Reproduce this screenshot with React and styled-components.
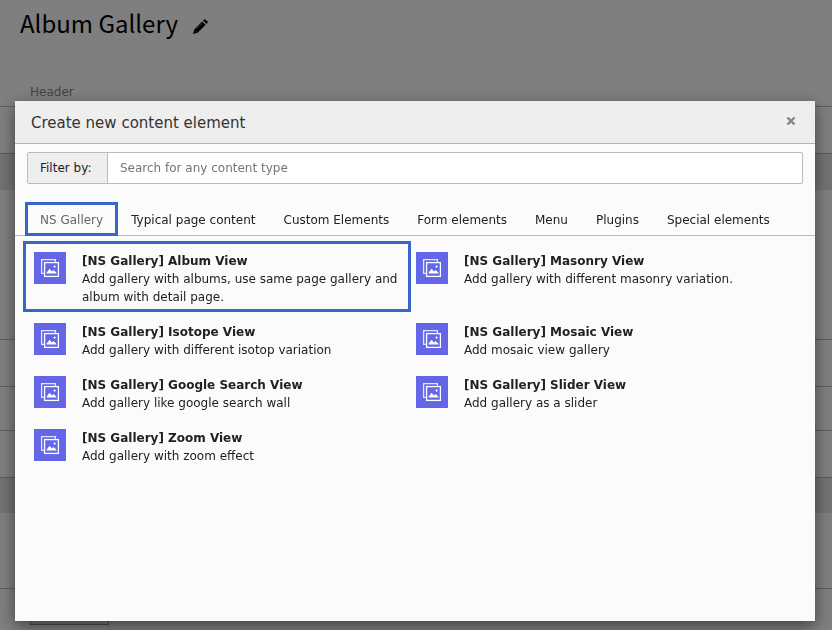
import { useState } from 'react';
import styled, { createGlobalStyle } from 'styled-components';

const tabs = [
    'NS Gallery',
    'Typical page content',
    'Custom Elements',
    'Form elements',
    'Menu',
    'Plugins',
    'Special elements',
];

const elements = [
    { title: '[NS Gallery] Album View', text: 'Add gallery with albums, use same page gallery and album with detail page.', marked: true },
    { title: '[NS Gallery] Masonry View', text: 'Add gallery with different masonry variation.' },
    { title: '[NS Gallery] Isotope View', text: 'Add gallery with different isotop variation' },
    { title: '[NS Gallery] Mosaic View', text: 'Add mosaic view gallery' },
    { title: '[NS Gallery] Google Search View', text: 'Add gallery like google search wall' },
    { title: '[NS Gallery] Slider View', text: 'Add gallery as a slider' },
    { title: '[NS Gallery] Zoom View', text: 'Add gallery with zoom effect' },
];

function GalleryIcon() {
    return (
        <svg width="32" height="32" viewBox="0 0 32 32" aria-hidden="true">
            <rect width="32" height="32" fill="#6366e6" />
            <path d="M10 21.4H7.6V7.6H21.4V10" fill="none" stroke="#e4e4ff" strokeWidth="1.3" />
            <rect x="10.6" y="10.6" width="13.8" height="13.8" fill="none" stroke="#fff" strokeWidth="1.3" />
            <path d="M12.7 21.6V20.4L15.6 16.8L18 19.4L19.6 18L22.4 20.8V21.6Z" fill="#fff" />
            <circle cx="20.6" cy="14.6" r="1.1" fill="#fff" />
        </svg>
    )
}

function PencilIcon() {
    return (
        <svg width="15" height="15" viewBox="0 0 15 15" aria-hidden="true">
            <path d="M0 15L1.2 10.4L9.2 2.4L12.6 5.8L4.6 13.8Z" />
            <path d="M10 1.6L11.2 0.4Q11.8 0 12.4 0.4L14.6 2.6Q15 3.2 14.6 3.8L13.4 5Z" />
            <path d="M3.2 10L8.8 4.4M1.8 11.4L3.6 13.2" fill="none" stroke="#777" strokeWidth="0.8" />
        </svg>
    )
}

function App() {
    const [activeTab, setActiveTab] = useState( 'NS Gallery' );
    const [search, setSearch] = useState( '' );

    const shown = activeTab === 'NS Gallery'
        ? elements.filter((item) => item.title.toLowerCase().includes( search.toLowerCase() ))
        : [];

  return (
      <>
          <GlobalStyle />
          <Page>
              <PageTitle>
                  Album Gallery
                  <EditBtn aria-label="Edit page title"><PencilIcon /></EditBtn>
              </PageTitle>
              <ColumnName>Header</ColumnName>
              <Slot $height={47} />
              <Slot $height={37} $shaded />
              <Slot $height={149} $plain />
              <Slot $height={47} />
              <Slot $height={44} />
              <Slot $height={47} />
              <Slot $height={36} $shaded />
              <Slot $height={75} $plain />
              <Slot $height={42}>
                  <SlotBtn aria-label="Content" />
              </Slot>
          </Page>
          <Backdrop>
              <Modal role="dialog" aria-labelledby="modal-title">
                  <ModalHeader>
                      <h1 id="modal-title">Create new content element</h1>
                      <CloseBtn aria-label="Close">
                          <svg width="10" height="10" viewBox="0 0 10 10">
                              <path d="M1.5 1.5L8.5 8.5M8.5 1.5L1.5 8.5" stroke="#858585" strokeWidth="2.4" />
                          </svg>
                      </CloseBtn>
                  </ModalHeader>
                  <Filter>
                      <label htmlFor="filter">Filter by:</label>
                      <input
                          id="filter"
                          type="text"
                          placeholder="Search for any content type"
                          value={search}
                          onChange={(e) => setSearch( e.target.value )}
                      />
                  </Filter>
                  <TabBar role="tablist">
                      {tabs.map((tab) => (
                          <Tab key={tab} role="tab" aria-selected={activeTab === tab} $active={activeTab === tab} onClick={() => setActiveTab( tab )}>{tab}</Tab>
                      ))}
                  </TabBar>
                  <Grid>
                      {shown.map((item) => (
                          <Item key={item.title} href="#" $marked={item.marked}>
                              <GalleryIcon />
                              <div>
                                  <h2>{item.title}</h2>
                                  <p>{item.text}</p>
                              </div>
                          </Item>
                      ))}
                  </Grid>
              </Modal>
          </Backdrop>
      </>
  )
}

const GlobalStyle = createGlobalStyle`
    * {
        box-sizing: border-box;
        margin: 0;
    }

    body {
        overflow: hidden;
        background: #fff;
        color: #212121;
        font: 12px/18px Verdana, "DejaVu Sans", sans-serif;
    }

    button, input {
        font: inherit;
        color: inherit;
    }
`;

const Page = styled.main`
    height: 100vh;
    overflow: hidden;
`;

const PageTitle = styled.h1`
    display: flex; align-items: center;
    gap: 15px;
    padding: 3px 20px 0;
    color: #000;
    font: 400 24px/40px "Noto Sans CJK JP", "Noto Sans", sans-serif;
`;

const EditBtn = styled.button`
    display: flex;
    padding: 6px 0 0;
    color: #000; background: none;
    border: 0;
`;

const ColumnName = styled.div`
    padding: 40px 30px 5px;
    color: #888;
`;

const Slot = styled.section`
    height: ${(props) => props.$height}px;
    padding-left: 30px;
    background: ${(props) => props.$shaded ? '#e6e6e6' : '#fff'};
    border-top: ${(props) => props.$plain ? 0 : '1px solid #bbb'};
`;

const SlotBtn = styled.button`
    width: 79px; height: 36px;
    background: #eee;
    border: 1px solid #999;
`;

const Backdrop = styled.div`
    position: fixed; inset: 0;
    display: flex;
    padding: 101px 17px 9px 15px;
    background: rgba(0, 0, 0, .5);
`;

const Modal = styled.div`
    flex: 1;
    min-width: 0;
    background: #fbfbfb;
    box-shadow: 0 5px 15px rgba(0, 0, 0, .5);
`;

const ModalHeader = styled.header`
    display: flex; align-items: center; justify-content: space-between;
    height: 43px;
    padding: 2px 18px 0 16px;
    background: #eee;
    border-bottom: 1px solid #b5b5b5;

    h1 {
        color: #333;
        font-size: 15px; font-weight: 400;
    }
`;

const CloseBtn = styled.button`
    display: flex;
    padding: 0 1px 4px;
    background: none;
    border: 0;
`;

const Filter = styled.div`
    display: flex;
    height: 32px;
    margin: 8px 12px 19px;
    background: #fff;
    border: 1px solid #bbb;
    border-radius: 2px;

    label {
        flex: 0 0 80px;
        padding: 6px 0 6px 12px;
        background: #eee;
        border-right: 1px solid #bbb;
        white-space: nowrap;
    }

    input {
        flex: 1;
        min-width: 0;
        padding: 0 12px;
        background: none;
        border: 0;
    }

    input::placeholder {
        color: #757575;
    }
`;

const TabBar = styled.div`
    display: flex;
    padding-left: 11px;
    border-bottom: 1px solid #bbb;
`;

const Tab = styled.button`
    padding: 8px 14px 6px;
    color: ${(props) => props.$active ? '#666' : '#212121'};
    background: none;
    border: 0;
    outline: ${(props) => props.$active ? '3px solid #3765cb' : 'none'};
    outline-offset: -2px;
    white-space: nowrap;
`;

const Grid = styled.div`
    display: grid;
    grid-template-columns: 1fr 1fr;
    row-gap: 6px;
    padding: 8px 25px 8px 11px;
`;

const Item = styled.a`
    display: flex; align-items: flex-start;
    gap: 16px;
    padding: 8px 8px 3px;
    color: inherit;
    text-decoration: none;
    outline: ${(props) => props.$marked ? '3px solid #3765cb' : 'none'};

    svg {
        flex: none;
    }

    h2 {
        font-size: 12px; font-weight: 700;
    }
`;

export default App
